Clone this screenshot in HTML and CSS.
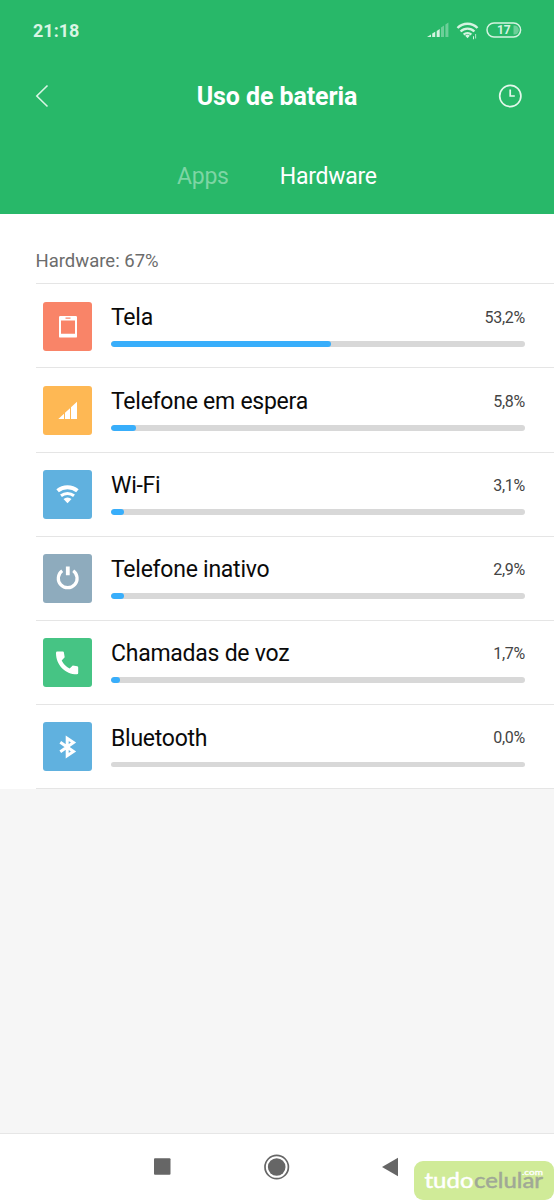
FILE: index.html
```html
<!DOCTYPE html>
<html lang="pt-BR">
<head>
<meta charset="utf-8">
<title>Uso de bateria</title>
<link rel="stylesheet" href="styles.css">
</head>
<body>
<div class="screen">
  <header class="header">
    <div class="status">
      <span class="time">21:18</span>
      <svg class="status-icons" width="100" height="24" viewBox="0 0 100 24">
        <g fill="#d5f3e1">
          <path d="M0 17l4-2.600V17zM5.200 13.600l3-1.800V17h-3zM9.700 10.900l3-2V17h-3z"/>
          <path opacity=".4" d="M14 7.500l3-2V17h-3zM18.400 4.500l3-2V17h-3z"/>
        </g>
        <g fill="none" stroke="#d5f3e1" stroke-width="2.400">
          <path d="M30.500 8a14 14 0 0 1 20 0M33.600 11.500a9.700 9.700 0 0 1 13.800 0M36.700 14.700a5.400 5.400 0 0 1 7.600 0"/>
        </g>
        <path fill="#d5f3e1" d="M40.500 18.200l-2.300-2.500a3.300 3.300 0 0 1 4.600 0zM46 16.200h1v3h-1zM48.300 14h.8v4.500h-.8z"/>
        <rect x="60" y="3" width="33.600" height="14" rx="7" fill="none" stroke="#d5f3e1" stroke-width="1.500"/>
        <path fill="#d5f3e1" opacity=".4" d="M86.500 5.500h.8a4.500 4.500 0 0 1 0 9h-.8z"/>
        <text class="battery-text" x="76.800" y="14.400">17</text>
      </svg>
    </div>
    <div class="titlebar">
      <svg width="16" height="26" viewBox="0 0 16 26"><path d="M13.500 2.500L2.800 13l10.700 10.500" fill="none" stroke="#d9f5e4" stroke-width="1.600"/></svg>
      <h1 class="title">Uso de bateria</h1>
      <svg width="26" height="26" viewBox="0 0 26 26" fill="none" stroke="#e3f8eb" stroke-width="1.700"><circle cx="13.300" cy="13" r="10.600"/><path d="M13.200 6.500V13h4.600"/></svg>
    </div>
    <nav class="tabs"><span class="tab tab-dim">Apps</span><span class="tab">Hardware</span></nav>
  </header>

  <main class="content">
    <div class="summary">Hardware: 67%</div>
    <ul class="list">
      <li class="row">
        <svg class="tile coral" viewBox="0 0 49 49"><path fill="#fff" fill-rule="evenodd" d="M17.200 14h15.600q1.200 0 1.200 1.200v19.200q0 1.200-1.200 1.200H17.200q-1.200 0-1.200-1.200V15.200Q16 14 17.200 14zM18 18.400v13.300h14V18.400zM22.500 15.500v1.200h5v-1.200z"/></svg>
        <div class="detail"><div class="labels"><span class="name">Tela</span><span class="percent">53,2%</span></div><div class="track"><div class="fill" style="width:220px"></div></div></div>
      </li>
      <li class="row">
        <svg class="tile orange" viewBox="0 0 49 49"><path fill="#fff" d="M15.300 33l5.700-5.200V33zM22 26.800l5-4.600V33h-5zM28 21.300l6-5.600V33h-6z"/></svg>
        <div class="detail"><div class="labels"><span class="name">Telefone em espera</span><span class="percent">5,8%</span></div><div class="track"><div class="fill" style="width:25px"></div></div></div>
      </li>
      <li class="row">
        <svg class="tile blue" viewBox="0 0 49 49"><path fill="#fff" d="M24.500 33.300l-4-4.300a6 6 0 0 1 8 0z"/><path fill="none" stroke="#fff" stroke-width="4" d="M14.600 20.800a15.800 15.800 0 0 1 19.800 0"/><path fill="none" stroke="#fff" stroke-width="3" d="M18 25.700a10.500 10.500 0 0 1 13 0"/></svg>
        <div class="detail"><div class="labels"><span class="name">Wi-Fi</span><span class="percent">3,1%</span></div><div class="track"><div class="fill" style="width:13px"></div></div></div>
      </li>
      <li class="row">
        <svg class="tile slate" viewBox="0 0 49 49" fill="none" stroke="#fff"><path stroke-width="3.200" d="M19.200 16.700a9.400 9.400 0 1 0 11 0"/><path stroke-width="3.800" d="M24.800 12.500v8.700"/></svg>
        <div class="detail"><div class="labels"><span class="name">Telefone inativo</span><span class="percent">2,9%</span></div><div class="track"><div class="fill" style="width:13px"></div></div></div>
      </li>
      <li class="row">
        <svg class="tile green" viewBox="0 0 49 49"><path fill="#fff" d="M14.200 13.500h5.600q1 0 1.100 1l.8 4.800-3 3.200q2.500 5.300 7.900 7.900l3.200-3 4.500.8q.9.200.9 1.200v5.500q0 1.400-1.400 1.400C22.300 36.300 13 27 13 14.900q0-1.400 1.200-1.400z"/></svg>
        <div class="detail"><div class="labels"><span class="name">Chamadas de voz</span><span class="percent">1,7%</span></div><div class="track"><div class="fill" style="width:9px"></div></div></div>
      </li>
      <li class="row">
        <svg class="tile blue" viewBox="0 0 49 49" fill="none" stroke="#fff" stroke-width="3"><path d="M17.300 20.300l13.200 9.200-6.300 4.200V16.300l6.300 4.200-13.200 9.200"/></svg>
        <div class="detail"><div class="labels"><span class="name">Bluetooth</span><span class="percent">0,0%</span></div><div class="track"></div></div>
      </li>
    </ul>
  </main>

  <footer class="navbar">
    <svg width="260" height="28" viewBox="0 0 260 28" fill="#666">
      <rect x="4" y="5.300" width="16.500" height="16.500" rx="1"/>
      <circle cx="126.700" cy="14" r="8.800"/><circle cx="126.700" cy="14" r="11.700" fill="none" stroke="#666" stroke-width="1.700"/>
      <path d="M232 14l16-9.200v18.400z"/>
    </svg>
  </footer>
  <div class="watermark">
    <svg width="140" height="39" viewBox="0 0 140 39">
      <text class="logo logo-light" x="10.500" y="27" textLength="49" lengthAdjust="spacingAndGlyphs">tudo</text>
      <text class="logo logo-dark" x="60" y="27" textLength="69" lengthAdjust="spacingAndGlyphs">celular</text>
      <text class="dotcom" x="108" y="13.500" textLength="21" lengthAdjust="spacingAndGlyphs">.com</text>
    </svg>
  </div>
</div>
</body>
</html>
```
FILE: styles.css
```css
* { box-sizing: border-box; }
body { margin: 0; font-family: Roboto, sans-serif; }
.screen { position: relative; display: flex; flex-direction: column; width: 554px; height: 1200px; overflow: hidden; background: #f6f6f6; }
.header { height: 214px; background: #28b869; color: #fff; }
.status { display: flex; justify-content: space-between; align-items: center; height: 60px; padding: 0 27px 0 33px; }
.time { padding-top: 1px; font-size: 18px; font-weight: 700; color: #d9f5e4; }
.status-icons { margin-top: 4px; }
.battery-text { font: 700 12px Roboto, sans-serif; fill: #d5f3e1; text-anchor: middle; }
.titlebar { display: flex; justify-content: space-between; align-items: center; height: 72px; padding: 0 31px 0 34px; }
.title { margin: 2px 0 0 7px; font-size: 25px; font-weight: 700; letter-spacing: -.1px; line-height: 30px; }
.tabs { display: flex; gap: 51px; height: 82px; padding: 30px 0 0 177px; font-size: 23px; letter-spacing: -.25px; line-height: 30px; }
.tab-dim { color: #7dd5a4; }
.content { background: #fff; height: 575px; padding-top: 34px; }
.summary { height: 35.400px; padding-left: 35.500px; font-size: 18.500px; line-height: 27px; color: #6c6c6c; }
.list { margin: 0 0 0 36px; padding: 0; list-style: none; border-bottom: 1px solid #e5e5e5; }
.row { display: flex; height: 84.100px; padding: 17.200px 29px 0 7px; border-top: 1px solid #e5e5e5; }
.tile { flex: none; width: 49px; height: 49px; margin-right: 19px; border-radius: 3px; }
.coral { background: #f98468; }
.orange { background: #feb854; }
.blue { background: #60b1df; }
.slate { background: #8eabbd; }
.green { background: #46c484; }
.detail { flex: 1; }
.labels { display: flex; justify-content: space-between; align-items: center; height: 31px; margin-bottom: 8.500px; }
.name { padding-top: 1px; font-size: 23px; letter-spacing: -.25px; color: #0a0a0a; }
.percent { font-size: 16px; letter-spacing: -.25px; color: #444; }
.track { height: 5.500px; border-radius: 3px; background: #d8d8d8; overflow: hidden; }
.fill { height: 100%; border-radius: 3px; background: #38aefb; }
.navbar { height: 67px; margin-top: auto; padding: 19px 0 0 150px; border-top: 1px solid #e6e6e6; background: #fff; }
.watermark { position: absolute; left: 414px; top: 1161px; width: 140px; height: 39px; border-radius: 9px; background: #d0eb98; }
.logo { font: 22px Lato, sans-serif; stroke-width: .5px; }
.logo-light { fill: #fff; stroke: #fff; }
.logo-dark { fill: #a0a896; stroke: #a0a896; }
.dotcom { font: 8px Lato, sans-serif; fill: #fff; stroke: #fff; stroke-width: .3px; }
```
